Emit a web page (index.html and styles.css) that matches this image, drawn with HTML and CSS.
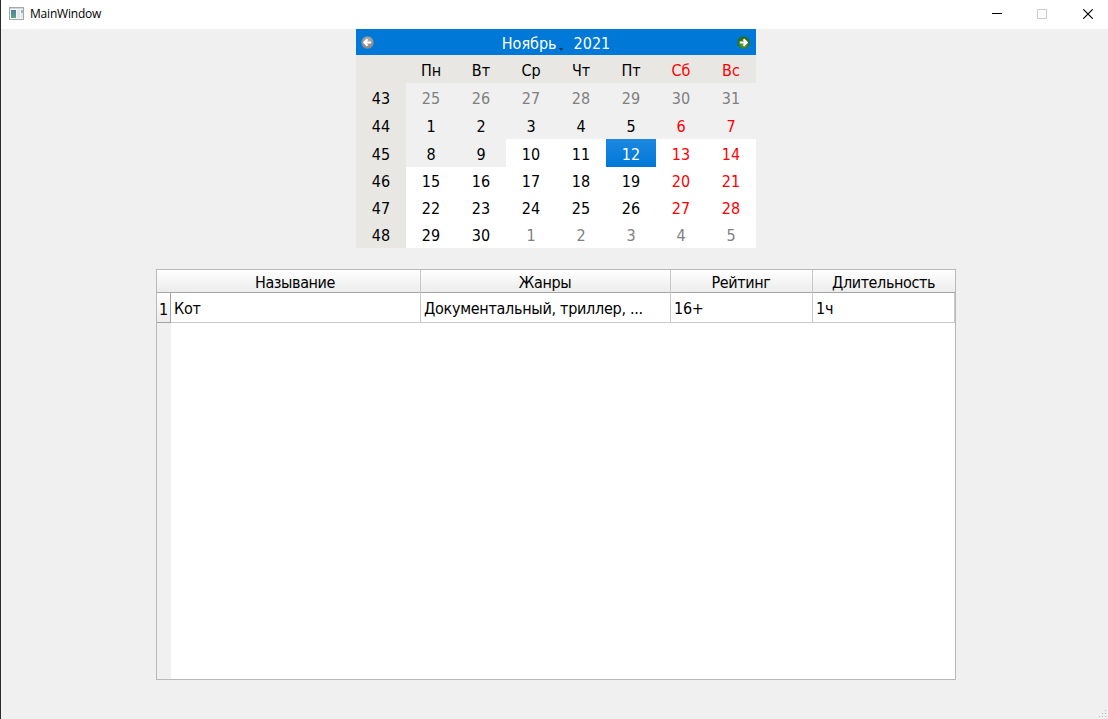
FILE: index.html
```html
<!DOCTYPE html>
<html lang="ru">
<head>
<meta charset="utf-8">
<title>MainWindow</title>
<link rel="stylesheet" href="styles.css">
</head>
<body>
<div class="window">
  <header class="titlebar">
    <svg class="app-icon" width="16" height="14" viewBox="0 0 16 14">
      <defs><linearGradient id="pane" x1="0" y1="0" x2="0" y2="1"><stop offset="0" stop-color="#4b7f9e"/><stop offset="1" stop-color="#56a784"/></linearGradient></defs>
      <rect x=".5" y=".5" width="14" height="12" fill="#f4f4f4" stroke="#a6a9ac"/>
      <rect x="1" y="1" width="13" height="1" fill="#d3d6d8"/>
      <rect x="2" y="3" width="5" height="8" fill="url(#pane)"/>
      <rect x="8" y="3" width="3" height="8" fill="#e4e6e8"/>
      <rect x="12" y="3" width="2" height="3" fill="#8fb9c4"/>
      <rect x="12" y="6" width="2" height="5" fill="#dfeae3"/>
    </svg>
    <span class="title">MainWindow</span>
    <div class="controls">
      <svg class="minimize" width="10" height="10"><path d="M0 4.500H10" stroke="#000"/></svg>
      <svg width="10" height="10"><rect x=".5" y=".5" width="9" height="9" fill="none" stroke="#ccc"/></svg>
      <svg width="10" height="10"><path d="M.3.300 9.700 9.700M9.700.300.300 9.700" stroke="#000" stroke-width="1.150"/></svg>
    </div>
  </header>
  <main class="content">
    <section class="calendar">
      <div class="nav">
        <svg width="13" height="13" viewBox="0 0 14 14">
          <defs><radialGradient id="gray" cy=".35"><stop offset="0" stop-color="#b5b5b5"/><stop offset="1" stop-color="#8c8c8c"/></radialGradient></defs>
          <circle cx="7" cy="7" r="6.700" fill="url(#gray)"/>
          <path d="M7 3.500 3.500 7 7 10.500M4 7H11" fill="none" stroke="#fff" stroke-width="2.200"/>
        </svg>
        <div class="period"><span class="month">Ноябрь</span><svg class="arrow" width="4" height="3"><path d="M0 0H4L2 3Z" fill="#123252"/></svg><span class="year">2021</span></div>
        <svg width="13" height="13" viewBox="0 0 14 14">
          <defs><radialGradient id="green" cy=".65"><stop offset="0" stop-color="#64a83c"/><stop offset="1" stop-color="#2b6b20"/></radialGradient></defs>
          <circle cx="7" cy="7" r="6.700" fill="url(#green)"/>
          <path d="M7 3.500 10.500 7 7 10.500M10 7H3" fill="none" stroke="#fff" stroke-width="2.200"/>
        </svg>
      </div>
      <div class="days">
        <b class="h"></b><b class="h">Пн</b><b class="h">Вт</b><b class="h">Ср</b><b class="h">Чт</b><b class="h">Пт</b><b class="h red">Сб</b><b class="h red">Вс</b>
        <b class="h">43</b><b class="off gray">25</b><b class="off gray">26</b><b class="off gray">27</b><b class="off gray">28</b><b class="off gray">29</b><b class="off gray">30</b><b class="off gray">31</b>
        <b class="h">44</b><b class="off">1</b><b class="off">2</b><b class="off">3</b><b class="off">4</b><b class="off">5</b><b class="off red">6</b><b class="off red">7</b>
        <b class="h">45</b><b class="off">8</b><b class="off">9</b><b>10</b><b>11</b><b class="selected">12</b><b class="red">13</b><b class="red">14</b>
        <b class="h">46</b><b>15</b><b>16</b><b>17</b><b>18</b><b>19</b><b class="red">20</b><b class="red">21</b>
        <b class="h">47</b><b>22</b><b>23</b><b>24</b><b>25</b><b>26</b><b class="red">27</b><b class="red">28</b>
        <b class="h">48</b><b>29</b><b>30</b><b class="gray">1</b><b class="gray">2</b><b class="gray">3</b><b class="gray">4</b><b class="gray">5</b>
      </div>
    </section>
    <section class="table">
      <div class="row head"><span class="corner"></span><span>Называние</span><span>Жанры</span><span>Рейтинг</span><span>Длительность</span></div>
      <div class="row data"><span class="index">1</span><span>Кот</span><span class="genres">Документальный, триллер, ...</span><span>16+</span><span>1ч</span></div>
      <div class="gutter"></div>
    </section>
  </main>
  <svg class="grip" width="8" height="8" fill="#b8b8b8"><path d="M6 0h1v1h-1zM3 3h1v1h-1zM6 3h1v1h-1zM0 6h1v1h-1zM3 6h1v1h-1zM6 6h1v1h-1z"/></svg>
</div>
</body>
</html>
```
FILE: styles.css
```css
* { box-sizing: border-box; }
body { margin: 0; background: #f0f0f0; color: #000; font: 16px/20px "DejaVu Sans Condensed", "DejaVu Sans", sans-serif; }
svg { display: block; flex: none; }
.window { position: relative; height: 719px; border-left: 1px solid #2b2b2b; overflow: hidden; }
.titlebar { display: flex; align-items: center; height: 29px; padding: 0 15px 2px 8px; background: #fff; }
.title { margin-left: 5px; font: 12px/16px "Open Sans", sans-serif; letter-spacing: -.2px; }
.controls { display: flex; gap: 36px; margin-left: auto; }
.minimize { margin-right: -1px; }
.content { display: flex; flex-direction: column; align-items: flex-start; gap: 21px; padding-left: 155px; }
.calendar { width: 400px; margin-left: 200px; }
.nav { display: flex; align-items: center; justify-content: space-between; height: 26px; padding: 0 6px 0 5px; background: #0078d7; color: #fff; }
.period { display: flex; align-items: center; padding: 3px 0 0 1px; }
.arrow { margin: 11px 11px 0 2px; }
.days { display: grid; grid-template-columns: repeat(8, 50px); grid-template-rows: repeat(4, 28px) repeat(3, 27px); }
.days b { display: flex; align-items: center; justify-content: center; padding-top: 2px; background: #fff; font-weight: 400; }
.days b:nth-child(-n+32) { padding-top: 3px; }
.days .h { background: #e8e7e3; }
.days .off { background: #f0f0f0; }
.days .gray { color: #808080; }
.days .red { color: #f00; }
.days .selected { background: linear-gradient(#1c88e0, #0078d7); color: #fff; }
.table { display: flex; flex-direction: column; width: 800px; height: 411px; border: 1px solid #b9b9b9; background: #fff; }
.row { display: grid; grid-template-columns: 14px 250px 250px 142px 142px; flex: none; letter-spacing: -.28px; }
.row span { display: flex; align-items: center; border-right: 1px solid #c8c8c8; white-space: nowrap; }
.head { height: 23px; border-bottom: 1px solid #a5a5a5; background: linear-gradient(#fff, #ececec); letter-spacing: -.4px; }
.head span { justify-content: center; padding: 3px 1px 0 0; }
.head .corner, .head span:last-child { border-right: 0; }
.data { height: 30px; }
.data span { padding: 3px 0 0 3px; border-bottom: 1px solid #c8c8c8; }
.data .index { justify-content: center; padding: 4px 0 0; border-color: #a5a5a5; background: linear-gradient(#fff, #ececec); }
.gutter { flex: 1; width: 14px; background: #f0f0f0; }
.grip { position: absolute; right: 1px; bottom: 1px; }
```
